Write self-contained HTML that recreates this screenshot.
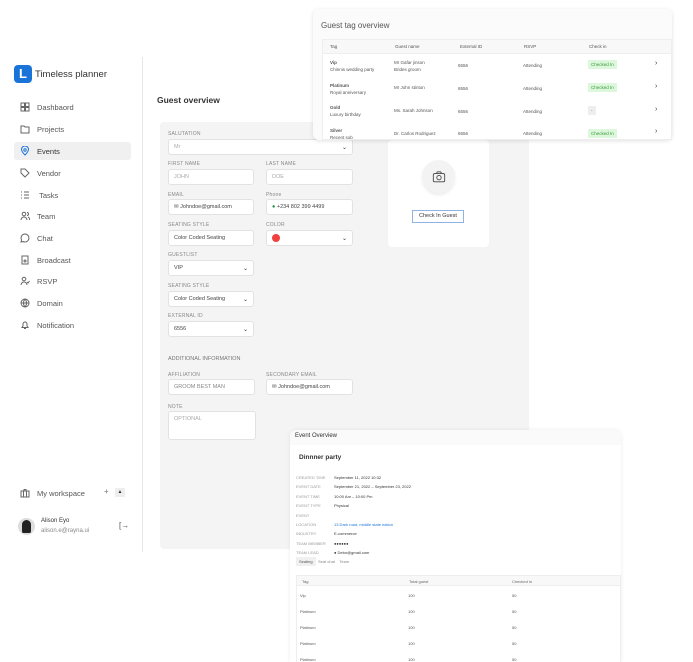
<!DOCTYPE html><html><head><style>
*{box-sizing:border-box;margin:0;padding:0}
body{width:693px;height:662px;background:#fff;font-family:"Liberation Sans",sans-serif;position:relative;overflow:hidden;color:#333}
.a{position:absolute}
.nav{left:20px;font-size:7.5px;color:#555;display:flex;align-items:center;gap:7px}
.nav svg{width:10px;height:10px;stroke:#666;fill:none;stroke-width:1}
.lbl{font-size:5px;color:#888;letter-spacing:.2px}
.in{background:#fff;border:1px solid #e2e2e2;border-radius:3px;height:16px;font-size:5.5px;color:#444;display:flex;align-items:center;padding:0 5px}
.ph{color:#aaa}
.chev{margin-left:auto;font-size:6px;color:#333}
.t{font-size:4.5px;color:#555}
</style></head><body>
<div class="a" style="left:142px;top:57px;width:1px;height:495px;background:#e6e6e6"></div>
<div class="a" style="left:14px;top:65px;width:18px;height:18px;background:#1a73d9;border-radius:4px;color:#fff;font-size:13px;font-weight:bold;text-align:center;line-height:18px">L</div>
<div class="a" style="left:35px;top:69px;font-size:9.5px;color:#333">Timeless planner</div>
<div class="a" style="left:14px;top:142px;width:117px;height:18px;background:#f0f0f0;border-radius:3px"></div>
<div class="a nav" style="top:102px"><svg viewBox="0 0 10 10"><rect x="1" y="1" width="3.5" height="3.5"/><rect x="5.5" y="1" width="3.5" height="3.5"/><rect x="1" y="5.5" width="3.5" height="3.5"/><rect x="5.5" y="5.5" width="3.5" height="3.5"/></svg>Dashbaord</div>
<div class="a nav" style="top:124px"><svg viewBox="0 0 10 10"><path d="M1 2h3l1 1h4v6H1z"/></svg>Projects</div>
<div class="a nav" style="top:146px;color:#333"><svg viewBox="0 0 10 10" style="stroke:#1a73d9"><path d="M5 9C2 6 1.5 4.5 1.5 3.5a3.5 3.5 0 017 0C8.5 4.5 8 6 5 9z"/><circle cx="5" cy="4" r="1.2"/></svg>Events</div>
<div class="a nav" style="top:168px"><svg viewBox="0 0 10 10"><path d="M1 1h4l4 4-4 4-4-4z"/></svg>Vendor</div>
<div class="a nav" style="top:190px"><svg viewBox="0 0 10 10"><path d="M1 2h1M4 2h5M1 5h1M4 5h5M1 8h1M4 8h5"/></svg>&nbsp;Tasks</div>
<div class="a nav" style="top:211px"><svg viewBox="0 0 10 10"><circle cx="4" cy="3" r="1.8"/><path d="M1 9a3 3 0 016 0M7 1.5a1.5 1.5 0 010 3M8 6a2.5 2.5 0 011.5 3"/></svg>Team</div>
<div class="a nav" style="top:233px"><svg viewBox="0 0 10 10"><path d="M5 1a4 4 0 11-2 7.5L1 9l.6-2A4 4 0 015 1z"/></svg>Chat</div>
<div class="a nav" style="top:255px"><svg viewBox="0 0 10 10"><rect x="2" y="1" width="6" height="8"/><circle cx="5" cy="6" r="1"/></svg>Broadcast</div>
<div class="a nav" style="top:276px"><svg viewBox="0 0 10 10"><circle cx="4" cy="3" r="1.8"/><path d="M1 9a3 3 0 016 0M7 6l1 1 1.5-2"/></svg>RSVP</div>
<div class="a nav" style="top:298px"><svg viewBox="0 0 10 10"><circle cx="5" cy="5" r="4"/><path d="M1 5h8M5 1c-2 2-2 6 0 8M5 1c2 2 2 6 0 8"/></svg>Domain</div>
<div class="a nav" style="top:320px"><svg viewBox="0 0 10 10"><path d="M2 7.5h6L7 6V4a2 2 0 00-4 0v2zM4 8.5h2"/></svg>Notification</div>
<div class="a nav" style="top:488px;font-size:7.5px"><svg viewBox="0 0 10 10"><rect x="1" y="3" width="8" height="6"/><path d="M4 3V1.5h2V3M3.5 3v6M6.5 3v6"/></svg>My workspace</div>
<div class="a" style="left:104px;top:487px;font-size:8px;color:#777">+</div>
<div class="a" style="left:115px;top:488px;width:10px;height:9px;background:#eee;font-size:5px;text-align:center;line-height:9px">▲</div>
<div class="a" style="left:18px;top:518px;width:17px;height:17px;border-radius:50%;background:#ddd"><div style="margin:2px 4px;width:9px;height:13px;background:#222;border-radius:5px 5px 2px 2px"></div></div>
<div class="a" style="left:41px;top:518px;font-size:6px;color:#333">Alison Eyo</div>
<div class="a" style="left:41px;top:528px;font-size:6px;color:#888">alison.e@rayna.ui</div>
<div class="a" style="left:119px;top:521px;font-size:8px;color:#555">[→</div>

<div class="a" style="left:157px;top:95px;font-size:8.5px;font-weight:bold;color:#333">Guest overview</div>
<div class="a" style="left:160px;top:122px;width:369px;height:427px;background:#f4f4f4;border-radius:4px"></div>
<div class="a" style="left:388px;top:140px;width:101px;height:107px;background:#fff;border-radius:4px"></div>
<div class="a" style="left:422px;top:160px;width:33px;height:33px;border-radius:50%;background:#f3f3f3;box-shadow:0 2px 3px rgba(0,0,0,.08)"><svg viewBox="0 0 16 16" style="width:14px;height:14px;margin:9.5px" fill="none" stroke="#444" stroke-width="1"><rect x="1.5" y="4" width="13" height="9.5" rx="1.5"/><path d="M5 4l1.2-2h3.6L11 4"/><circle cx="8" cy="8.7" r="2.5"/></svg></div>
<div class="a" style="left:412px;top:210px;width:52px;height:13px;border:1px solid #8fb3e5;background:#fff;font-size:5.5px;text-align:center;line-height:11px;color:#333">Check In Guest</div>

<div class="a lbl" style="left:168px;top:131px">SALUTATION</div>
<div class="a in" style="left:168px;top:139px;width:185px"><span class="ph">Mr</span><span class="chev">⌄</span></div>
<div class="a lbl" style="left:168px;top:161px">FIRST NAME</div><div class="a lbl" style="left:266px;top:161px">LAST NAME</div>
<div class="a in" style="left:168px;top:169px;width:86px"><span class="ph">JOHN</span></div>
<div class="a in" style="left:266px;top:169px;width:87px"><span class="ph">DOE</span></div>
<div class="a lbl" style="left:168px;top:192px">EMAIL</div><div class="a lbl" style="left:266px;top:192px">Phone</div>
<div class="a in" style="left:168px;top:199px;width:86px">✉&nbsp;Johndoe@gmail.com</div>
<div class="a in" style="left:266px;top:199px;width:87px"><span style="color:#1a8a3a">●</span>&nbsp;+234 802 399 4499</div>
<div class="a lbl" style="left:168px;top:222px">SEATING STYLE</div><div class="a lbl" style="left:266px;top:222px">COLOR</div>
<div class="a in" style="left:168px;top:230px;width:86px">Color Coded Seating</div>
<div class="a in" style="left:266px;top:230px;width:87px"><span style="width:8px;height:8px;border-radius:50%;background:#f04040;display:inline-block"></span><span class="chev">⌄</span></div>
<div class="a lbl" style="left:168px;top:252px">GUESTLIST</div>
<div class="a in" style="left:168px;top:260px;width:86px">VIP<span class="chev">⌄</span></div>
<div class="a lbl" style="left:168px;top:283px">SEATING STYLE</div>
<div class="a in" style="left:168px;top:291px;width:86px">Color Coded Seating<span class="chev">⌄</span></div>
<div class="a lbl" style="left:168px;top:313px">EXTERNAL ID</div>
<div class="a in" style="left:168px;top:321px;width:86px">6556<span class="chev">⌄</span></div>
<div class="a" style="left:168px;top:356px;font-size:5.5px;color:#777">ADDITIONAL INFORMATION</div>
<div class="a lbl" style="left:168px;top:372px">AFFILIATION</div><div class="a lbl" style="left:266px;top:372px">SECONDARY EMAIL</div>
<div class="a in" style="left:168px;top:379px;width:87px"><span class="ph" style="color:#888">GROOM BEST MAN</span></div>
<div class="a in" style="left:266px;top:379px;width:87px">✉&nbsp;Johndoe@gmail.com</div>
<div class="a lbl" style="left:168px;top:404px">NOTE</div>
<div class="a in" style="left:168px;top:411px;width:88px;height:29px;align-items:flex-start;padding-top:4px"><span class="ph">OPTIONAL</span></div>

<div class="a" style="left:313px;top:9px;width:359px;height:131px;background:#fbfbfb;border-radius:6px;box-shadow:0 1px 4px rgba(0,0,0,.12)">
<div class="a" style="left:8px;top:12px;font-size:8px;color:#555">Guest tag overview</div>
<div class="a" style="left:9px;top:30px;width:350px;height:101px;background:#fff;border:1px solid #eee;overflow:hidden">
<div style="height:14px;background:#f8f8f8;border-bottom:1px solid #eee;position:relative" class="t">
<span class="a" style="left:7px;top:4px">Tag</span><span class="a" style="left:72px;top:4px">Guest name</span><span class="a" style="left:137px;top:4px">External ID</span><span class="a" style="left:201px;top:4px">RSVP</span><span class="a" style="left:266px;top:4px">Check in</span></div>
</div></div>
<div class="a t" style="left:330px;top:59px;line-height:7px"><b>Vip</b><br>Chinnis wedding party</div>
<div class="a t" style="left:394px;top:59px;line-height:7px">Mr Gafar jinson<br>Brides groom</div>
<div class="a t" style="left:330px;top:82px;line-height:7px"><b>Platinum</b><br>Royal anniversary</div>
<div class="a t" style="left:394px;top:85px">Mr John stinton</div>
<div class="a t" style="left:330px;top:104px;line-height:7px"><b>Gold</b><br>Luxury birthday</div>
<div class="a t" style="left:394px;top:108px">Ms. Sarah Johnson</div>
<div class="a t" style="left:330px;top:127px;line-height:7px"><b>Silver</b><br>Recent sob</div>
<div class="a t" style="left:394px;top:131px">Dr. Carlos Rodriguez</div>
<div class="a t" style="left:458px;top:63px">6556</div><div class="a t" style="left:458px;top:86px">6556</div><div class="a t" style="left:458px;top:109px">6556</div><div class="a t" style="left:458px;top:131px">6556</div>
<div class="a t" style="left:523px;top:63px">Attending</div><div class="a t" style="left:523px;top:86px">Attending</div><div class="a t" style="left:523px;top:109px">Attending</div><div class="a t" style="left:523px;top:131px">Attending</div>
<div class="a t" style="left:588px;top:60px;background:#dcf7dc;color:#3a9a3a;padding:2px 3px">Checked In</div>
<div class="a t" style="left:588px;top:83px;background:#dcf7dc;color:#3a9a3a;padding:2px 3px">Checked In</div>
<div class="a t" style="left:588px;top:106px;background:#eee;padding:2px 3px">-</div>
<div class="a t" style="left:588px;top:129px;background:#dcf7dc;color:#3a9a3a;padding:2px 3px">Checked In</div>
<div class="a" style="left:655px;top:60px;font-size:7px">›</div><div class="a" style="left:655px;top:83px;font-size:7px">›</div><div class="a" style="left:655px;top:106px;font-size:7px">›</div><div class="a" style="left:655px;top:128px;font-size:7px">›</div>

<div class="a" style="left:290px;top:430px;width:331px;height:232px;background:#fff;border-radius:6px 6px 0 0;box-shadow:0 0 4px rgba(0,0,0,.08);overflow:hidden">
<div style="height:15px;background:#fafafa;font-size:6px;color:#333;padding:3px 5px">Event Overview</div>
<div class="a" style="left:9px;top:24px;font-size:6.5px;font-weight:bold">Dinnner party</div>
<div class="a t" style="left:6px;top:43px;line-height:9.4px;color:#999;font-size:4px">CREATED TIME<br>EVENT DATE<br>EVENT TIME<br>EVENT TYPE<br>EVENT<br>LOCATION<br>INDUSTRY<br>TEAM MEMBER<br>TEAM LEAD</div>
<div class="a t" style="left:44px;top:43px;line-height:9.4px;font-size:4px;color:#333">September 11, 2022 10:32<br>September 21, 2022 – September 23, 2022<br>10:00 Am – 10:00 Pm<br>Physical<br><br><span style="color:#1a73d9">13 Dark road, middle state nation</span><br>E-commerce<br>●●●●●●<br>● Debo@gmail.com</div>
<div class="a t" style="left:6px;top:127px;background:#f0f0f0;padding:2px 3px;font-size:4px">Seating</div>
<div class="a t" style="left:28px;top:129px;font-size:4px;color:#888">Seat chat&nbsp;&nbsp;&nbsp;&nbsp;Team</div>
<div class="a" style="left:6px;top:145px;width:325px;height:90px;border:1px solid #eee">
<div style="height:10px;background:#f8f8f8;border-bottom:1px solid #eee;position:relative;font-size:4px;color:#666"><span class="a" style="left:5px;top:3px">Tag</span><span class="a" style="left:112px;top:3px">Total guest</span><span class="a" style="left:215px;top:3px">Checked in</span></div>
</div>
<div class="a t" style="left:10px;top:158px;font-size:4px;line-height:16px;color:#555">Vip<br>Platinum<br>Platinum<br>Platinum<br>Platinum</div>
<div class="a t" style="left:118px;top:158px;font-size:4px;line-height:16px">100<br>100<br>100<br>100<br>100</div>
<div class="a t" style="left:222px;top:158px;font-size:4px;line-height:16px">50<br>50<br>50<br>50<br>50</div>
</div>
</body></html>
